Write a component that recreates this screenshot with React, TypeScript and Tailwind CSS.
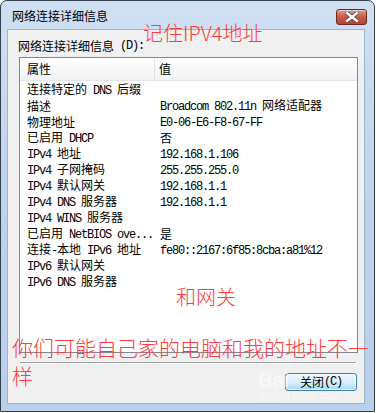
import React from 'react';

const rows: [string, string][] = [
  ['连接特定的 DNS 后缀', ''],
  ['描述', 'Broadcom 802.11n 网络适配器'],
  ['物理地址', 'E0-06-E6-F8-67-FF'],
  ['已启用 DHCP', '否'],
  ['IPv4 地址', '192.168.1.106'],
  ['IPv4 子网掩码', '255.255.255.0'],
  ['IPv4 默认网关', '192.168.1.1'],
  ['IPv4 DNS 服务器', '192.168.1.1'],
  ['IPv4 WINS 服务器', ''],
  ['已启用 NetBIOS ove...', '是'],
  ['连接-本地 IPv6 地址', 'fe80::2167:6f85:8cba:a81%12'],
  ['IPv6 默认网关', ''],
  ['IPv6 DNS 服务器', ''],
];

// SimSun-like mix: CJK at 12px, latin as 6px-wide monospace
const Txt = ({ s }: { s: string }) => (
  <>
    {s.split(/([\u3000-\u9fff\uff00-\uffef]+)/).map((part, i) =>
      part === '' ? null : /[\u3000-\u9fff\uff00-\uffef]/.test(part) ? (
        <span key={i} className="text-[12px] leading-[16px]">
          {part}
        </span>
      ) : (
        <span
          key={i}
          className="font-['Liberation_Mono',monospace] text-[12px] leading-[16px] tracking-[-1.2px] whitespace-pre"
        >
          {part}
        </span>
      )
    )}
  </>
);

const CloseX = () => (
  <svg width="14" height="10" viewBox="0 0 14 10">
    <path
      d="M2 1 L12 9 M12 1 L2 9"
      stroke="#4a4a4a"
      strokeWidth="4"
      strokeLinecap="square"
    />
    <path
      d="M2 1 L12 9 M12 1 L2 9"
      stroke="#ffffff"
      strokeWidth="2.4"
      strokeLinecap="square"
    />
  </svg>
);

export default function App() {
  return (
    <div className="relative w-[376px] h-[413px] bg-white font-['Noto_Sans_CJK_SC',sans-serif] text-black leading-none overflow-hidden">
      <div className="w-[375px] h-[412px] flex flex-col rounded-t-[7px] border border-[#33414f] bg-gradient-to-b from-[#cfe0f2] via-[#bcd3eb] to-[#b8d0ea]">
        {/* title bar */}
        <div className="h-[28px] flex items-start justify-between pt-[9px] pl-[11px] pr-[7px]">
          <span className="text-[12px] leading-[14px] -mt-[1px]">网络连接详细信息</span>
          <div className="w-[31px] h-[16px] -mt-[1px] rounded-[3px] border border-[#6b2a22] bg-gradient-to-b from-[#e49a8c] via-[#c75a47] to-[#b8432f] flex items-center justify-center shadow-[inset_0_1px_0_rgba(255,255,255,0.5)]">
            <CloseX />
          </div>
        </div>

        {/* client area */}
        <div className="flex-1 ml-[6px] mr-[9px] mb-[7px] bg-[#f0f0f0] border border-[#9fb3c8] flex flex-col">
          <div className="ml-[10px] mt-[8px] h-[16px] flex items-center">
            <Txt s="网络连接详细信息 (D):" />
          </div>

          <div className="ml-[11px] mt-[3px] w-[339px] h-[296px] border border-[#828790] bg-white flex flex-col overflow-hidden">
            <div className="h-[23px] flex bg-gradient-to-b from-white to-[#f1f2f4] border-b border-[#e2e5ea]">
              <div className="w-[135px] border-r border-[#dfe3e8] pl-[7px] flex items-center">
                <Txt s="属性" />
              </div>
              <div className="pl-[4px] flex items-center">
                <Txt s="值" />
              </div>
            </div>
            {rows.map(([k, v]) => (
              <div key={k} className="h-[16px] flex items-center whitespace-nowrap">
                <div className="w-[135px] shrink-0 pl-[7px]">
                  <Txt s={k} />
                </div>
                <div className="pl-[5px]">
                  <Txt s={v} />
                </div>
              </div>
            ))}
          </div>

          <div className="ml-[12px] mt-[9px] w-[336px] h-[2px] border-t border-[#a0a0a0] border-b-white border-b" />

          <div className="self-end mr-[7px] mt-[9px] w-[72px] h-[18px] rounded-[3px] border border-[#3c7fb1] bg-gradient-to-b from-[#eaf6fd] via-[#d9f0fc] to-[#a7d9f5] shadow-[inset_0_0_0_1px_rgba(255,255,255,0.7)] flex items-center justify-center">
            <Txt s="关闭(C)" />
          </div>
        </div>
      </div>

      {/* baidu watermark */}
      <div className="absolute left-[258px] top-[370px] text-[20px] font-bold text-white/50 font-['Liberation_Sans',sans-serif]">
        Bai
      </div>
      <div className="absolute left-[258px] top-[391px] text-[10px] text-white/50 font-['Liberation_Sans',sans-serif]">
        jingyan.baidu.com
      </div>

      {/* red annotations */}
      <div className="absolute left-[143px] top-[22px] text-[20px] leading-[22px] font-light text-[#ff3b3b] whitespace-nowrap">
        记住IPV4地址
      </div>
      <div className="absolute left-[176px] top-[286px] text-[20px] leading-[22px] font-light text-[#ff3b3b]">
        和网关
      </div>
      <div className="absolute left-[12px] top-[333px] text-[21px] leading-[28px] font-light text-[#ff3b3b] whitespace-nowrap">
        你们可能自己家的电脑和我的地址不一
        <br />样
      </div>
    </div>
  );
}
